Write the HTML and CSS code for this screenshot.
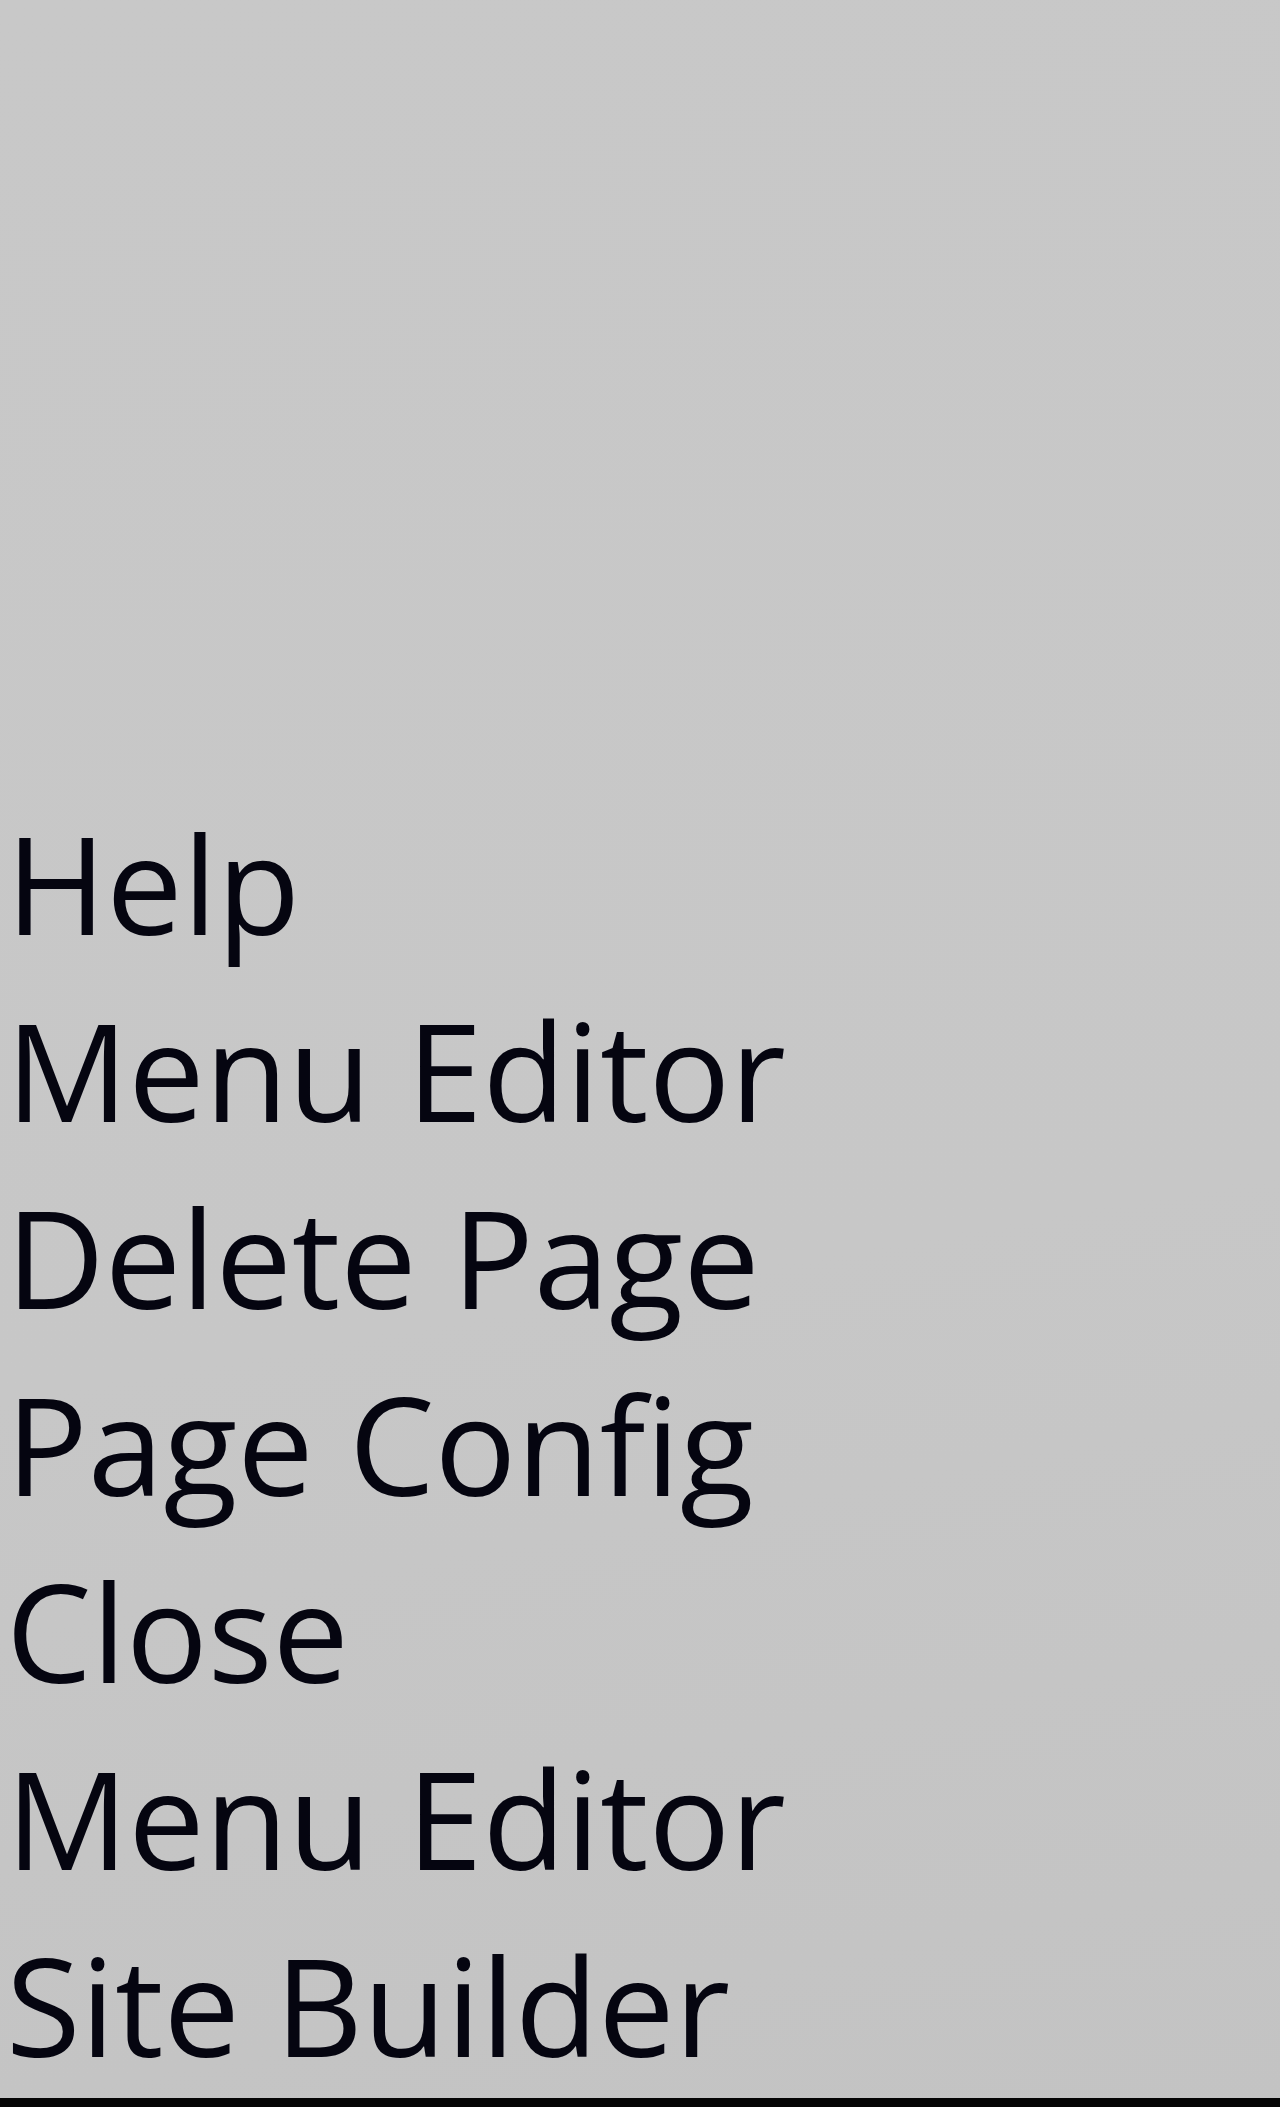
FILE: index.html
```html
<!DOCTYPE html>
<html>
<head>
<meta charset="utf-8">
<link rel="stylesheet" href="styles.css">
</head>
<body>
<div class="screen">
  <ul class="menu">
    <li class="item">Help</li>
    <li class="item">Menu Editor</li>
    <li class="item">Delete Page</li>
    <li class="item">Page Config</li>
    <li class="item">Close</li>
    <li class="item">Menu Editor</li>
    <li class="item">Site Builder</li>
  </ul>
  <div class="taskbar"></div>
</div>
</body>
</html>
```
FILE: styles.css
```css
html, body {
  margin: 0;
  padding: 0;
}
body {
  width: 1280px;
  height: 2107px;
  overflow: hidden;
  background: #c7c7c7;
}
.screen {
  width: 1280px;
  height: 2107px;
  display: flex;
  flex-direction: column;
  background: linear-gradient(170deg, #c8c8c8 0%, #c7c7c7 60%, #c3c3c3 100%);
}
.menu {
  list-style: none;
  margin: 0;
  padding: 789px 0 0 6px;
  flex: 1;
  font-family: "Open Sans", "Noto Sans", sans-serif;
  font-size: 136px;
  line-height: 187px;
  color: #050510;
  letter-spacing: 0;
}
.item {
  white-space: nowrap;
}
.taskbar {
  height: 10px;
  background: #050505;
}
```
